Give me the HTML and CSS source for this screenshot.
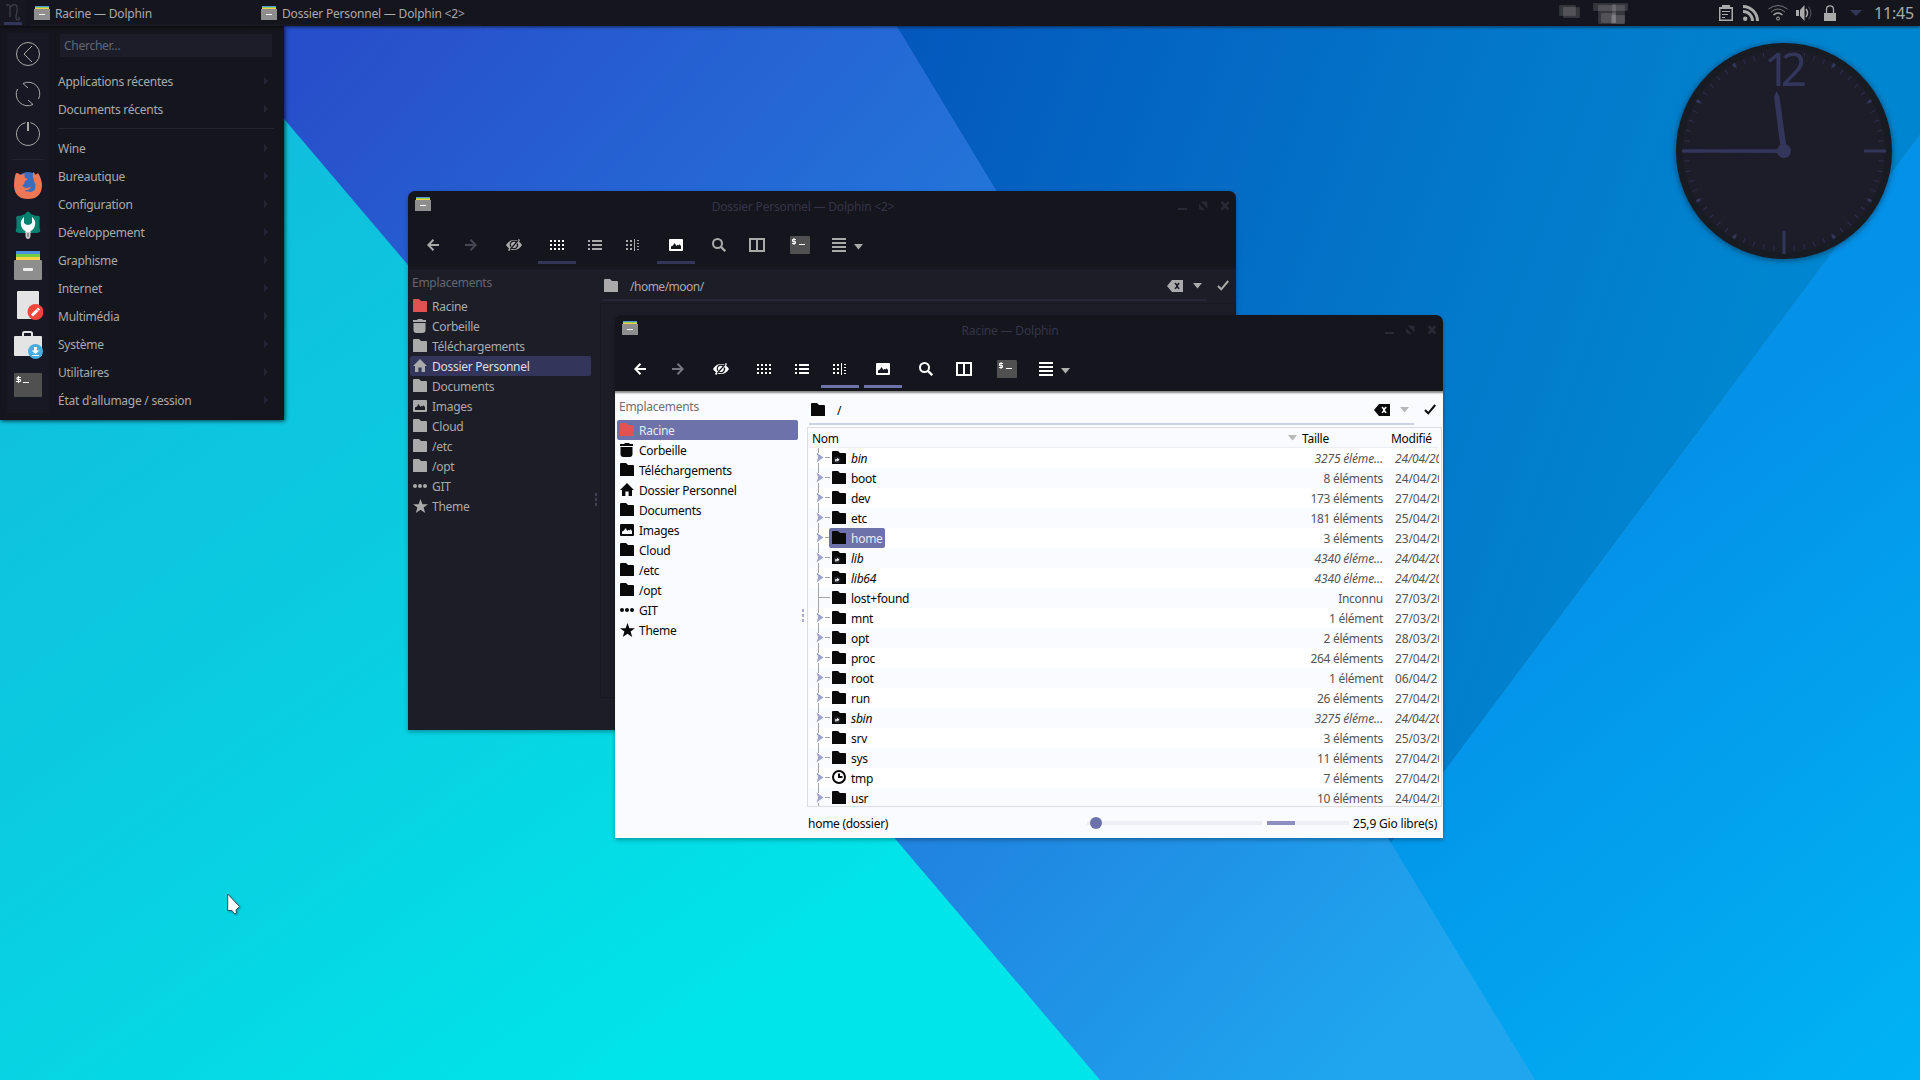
FILE: index.html
```html
<!DOCTYPE html>
<html lang="fr">
<head>
<meta charset="utf-8">
<title>Bureau</title>
<link rel="stylesheet" href="styles.css">
</head>
<body>
<svg class="defs" width="0" height="0" aria-hidden="true">
  <symbol id="folder" viewBox="0 0 14 13"><path d="M0 1.2Q0 0 1 0H6L8 2H13Q14 2 14 3V13H0z"/></symbol>
  <symbol id="folder-link" viewBox="0 0 14 13"><path d="M0 1.2Q0 0 1 0H6L8 2H13Q14 2 14 3V13H0z"/><circle cx="5" cy="8.8" r="3.4" fill="#23232c"/><path d="M3.2 10.4V8.2H5.2V6.8L7.400 8.800L5.200 10.600V9.600H4.400V10.400z" fill="#fff"/></symbol>
  <symbol id="trash" viewBox="0 0 14 14"><path d="M0 1H4L5 0H9L10 1H13V3H0zM.5 4H12.5V11Q12.500 14 9.500 14H3.500Q.5 14 .5 11z"/></symbol>
  <symbol id="home" viewBox="0 0 14 13"><path d="M7 0L14 7H12V13H8.600V8.500H5.400V13H2V7H0z"/></symbol>
  <symbol id="picture" viewBox="0 0 14 12"><path fill-rule="evenodd" d="M1 0H13Q14 0 14 1V11Q14 12 13 12H1Q0 12 0 11V1Q0 0 1 0zM2 10H12V7L10.500 5.200L9.500 6.400L8.500 5.800L7.500 7L5.500 4L4 6.500L2 7.500z"/></symbol>
  <symbol id="dots" viewBox="0 0 14 4"><circle cx="2" cy="2" r="2"/><circle cx="7" cy="2" r="2"/><circle cx="12" cy="2" r="2"/></symbol>
  <symbol id="star" viewBox="0 0 15 14"><path d="M7.500 0L9.400 5.200H15L10.600 8.500L12.200 14L7.500 10.700L2.800 14L4.400 8.500L0 5.200H5.600z"/></symbol>
  <symbol id="recent" viewBox="0 0 14 14"><circle cx="7" cy="7" r="6" fill="none" stroke="currentColor" stroke-width="2"/><path d="M6 3.500H8V6H10.500V8H6z"/></symbol>
  <symbol id="drawer" viewBox="0 0 16 14"><path fill="#5294e2" d="M1 0H15V1H1z"/><path fill="#8bd34f" d="M1 1H15V2H1z"/><path fill="#f9cc45" d="M1 2H15V3H1z"/><path fill="#8e8e8e" d="M0 3H16V14H0z"/><path fill="#fff" d="M5 8H11V9H5z"/></symbol>
  <symbol id="back" viewBox="0 0 12 12"><path fill="none" stroke="currentColor" stroke-width="2" d="M6.500.8L1.300 6L6.500 11.200M1 6H12"/></symbol>
  <symbol id="forward" viewBox="0 0 12 12"><path fill="none" stroke="currentColor" stroke-width="2" d="M5.500.8L10.700 6L5.500 11.200M11 6H0"/></symbol>
  <symbol id="eye" viewBox="0 0 16 12"><path d="M0 6Q3 1 8 1Q10 1 11.400 1.600L12.800 0L14 1L13 2.700Q15 4 16 6Q13 11 8 11Q6 11 4.600 10.400L3.200 12L2 11L3 9.300Q1 8 0 6z"/><path d="M10.700 3.600A3.500 3.500 0 0 0 5 7.700M11.200 4.600A3.500 3.500 0 0 1 5.600 8.600M4.300 10.200L12.200 1.400" fill="none" stroke="#16161f" stroke-width="1.300"/></symbol>
  <symbol id="grid" viewBox="0 0 14 10"><path d="M0 0h2v2h-2zM4 0h2v2h-2zM8 0h2v2h-2zM12 0h2v2h-2zM0 4h2v2h-2zM4 4h2v2h-2zM8 4h2v2h-2zM12 4h2v2h-2zM0 8h2v2h-2zM4 8h2v2h-2zM8 8h2v2h-2zM12 8h2v2h-2z"/></symbol>
  <symbol id="list" viewBox="0 0 14 10"><path d="M0 0h2v2h-2zM0 4h2v2h-2zM0 8h2v2h-2zM4 0h10v2h-10zM4 4h10v2h-10zM4 8h10v2h-10z"/></symbol>
  <symbol id="tree" viewBox="0 0 14 12"><path d="M0 1h2v2h-2zM4 1h2v2h-2zM0 5h2v2h-2zM4 5h2v2h-2zM0 9h2v2h-2zM4 9h2v2h-2zM8 0h1v12h-1zM11 1h2v1h-2zM11 4h2v1h-2zM11 7h2v1h-2zM11 10h2v1h-2z"/></symbol>
  <symbol id="search" viewBox="0 0 14 14"><circle cx="5.500" cy="5.500" r="4.500" fill="none" stroke="currentColor" stroke-width="2"/><path d="M8.800 8.800L13.200 13.200" stroke="currentColor" stroke-width="2.300"/></symbol>
  <symbol id="split" viewBox="0 0 16 14"><path fill-rule="evenodd" d="M0 0H16V14H0zM2 2V12H7V2zM9 2V12H14V2z"/></symbol>
  <symbol id="terminal" viewBox="0 0 20 18"><rect width="20" height="18" rx="1" fill="#505050"/><path d="M6 3.500H2.500V5.500H5.500V7.500H2M4 2V9M9 8.500H15" fill="none" stroke="#fff"/></symbol>
  <symbol id="menu" viewBox="0 0 14 14"><path d="M0 0H14V2H0zM0 4H14V6H0zM0 8H14V10H0zM0 12H14V14H0z"/></symbol>
  <symbol id="caret" viewBox="0 0 9 6"><path d="M0 0H9L4.500 5.500z"/></symbol>
  <symbol id="clear" viewBox="0 0 16 12"><path fill-rule="evenodd" d="M5 0H16V12H5L0 6zM7.400 3.700L9 5.300V6.700L7.400 8.300L8.700 9.300L10 7.700L11.500 9.300L12.800 8.300L11.200 6.700V5.300L12.800 3.700L11.500 2.600L10 4.300L8.700 2.600z"/></symbol>
  <symbol id="check" viewBox="0 0 12 11"><path d="M1 6L4.200 9.300L11.200 1" fill="none" stroke="currentColor" stroke-width="2"/></symbol>
  <symbol id="controls" viewBox="0 0 52 10"><path d="M0 7H9V9H0zM22.500 .5H27.500Q29.500 .5 29.500 2.500V7.500zM21 3L27 9H24Q21 9 21 6z"/><path d="M43.500 1L50.500 8.500M50.500 1L43.500 8.500" stroke="currentColor" stroke-width="2.600"/></symbol>
  <symbol id="expander" viewBox="0 0 14 20"><path d="M2.500 0V5M2.500 15V20M9 9.500H14" stroke="#a2a2a8" fill="none"/><path d="M.5 4.500L7.500 9.500L.5 14.500L2 9.500z" fill="#a2a5cf"/></symbol>
  <symbol id="leaf" viewBox="0 0 14 20"><path d="M2.500 0V20M3 9.500H14" stroke="#a2a2a8" fill="none"/></symbol>
</svg>

<svg class="wallpaper" viewBox="0 0 1920 1080" aria-hidden="true">
  <defs>
    <linearGradient id="ga" gradientUnits="userSpaceOnUse" x1="150" y1="150" x2="750" y2="1000"><stop offset="0" stop-color="#11bcdc"/><stop offset=".5" stop-color="#0acde1"/><stop offset="1" stop-color="#00e5e9"/></linearGradient>
    <linearGradient id="gb" gradientUnits="userSpaceOnUse" x1="290" y1="100" x2="1350" y2="1080"><stop offset="0" stop-color="#284fcb"/><stop offset=".38" stop-color="#2373d9"/><stop offset=".7" stop-color="#2086e1"/><stop offset="1" stop-color="#1fa6ef"/></linearGradient>
    <linearGradient id="gc" gradientUnits="userSpaceOnUse" x1="900" y1="60" x2="1750" y2="360"><stop offset="0" stop-color="#0458bd"/><stop offset=".6" stop-color="#0376c9"/><stop offset="1" stop-color="#0086d0"/></linearGradient>
    <linearGradient id="gd" gradientUnits="userSpaceOnUse" x1="1500" y1="600" x2="1900" y2="1080"><stop offset="0" stop-color="#0491e8"/><stop offset="1" stop-color="#00b3f4"/></linearGradient>
  </defs>
  <path fill="url(#gb)" d="M0 0H1920V1080H0z"/>
  <path fill="url(#ga)" d="M0 0H183L1100 1080H0z"/>
  <path fill="url(#gc)" d="M881 0H1920V135L1391 843z"/>
  <path fill="url(#gd)" d="M1920 135L1391 843L1535 1080H1920z"/>
</svg>

<header class="panel">
  <div class="launcher"><svg width="18" height="20" viewBox="0 0 18 20"><path d="M3 4Q6 1 6 6V15M6 6Q9 1 12 3Q14 5 12.500 12Q11 18 14 18Q17 17 14 15M3 2V4" fill="none" stroke="#3b3b46" stroke-width="1.400"/></svg></div>
  <div class="task"><svg width="16" height="14"><use href="#drawer"/></svg>Racine — Dolphin</div>
  <div class="task"><svg width="16" height="14"><use href="#drawer"/></svg>Dossier Personnel — Dolphin &lt;2&gt;</div>
  <svg class="pager" width="90" height="26" viewBox="0 0 90 26"><g fill="#fff" fill-opacity=".14" stroke="#fff" stroke-opacity=".06"><path d="M10.500 5.500h16v10h-16z"/><path d="M14.500 7.500h16v10h-16z"/><path d="M44.500 3.500h34v7h-34z"/><path d="M49.500 5.500h26v18h-26z"/><path d="M52.500 13.500h14v9h-14z"/><path d="M62.500 15.500h13v8h-13z"/><path d="M63.500 4.500h3v18h-3z"/></g></svg>
  <div class="tray">
    <svg width="14" height="16" viewBox="0 0 14 16"><path fill-rule="evenodd" d="M0 2H3V0H11V2H14V16H0zM1.500 4V14.500H12.500V4zM3 6H11V7H3zM3 9H9V10H3zM3 12H6V13H3z"/></svg>
    <svg width="16" height="16" viewBox="0 0 16 16"><circle cx="2.200" cy="13.800" r="2.200"/><path d="M0 6.500A9.500 9.500 0 0 1 9.500 16M0 1.500A14.500 14.500 0 0 1 14.500 16" fill="none" stroke="currentColor" stroke-width="3"/></svg>
    <svg class="line" width="20" height="16" viewBox="0 0 20 16"><circle cx="10" cy="13.500" r="1.500"/><path d="M5.500 10Q10 6 14.500 10" stroke-width="1.500"/><path d="M3 7Q10 1 17 7M.5 4Q10-3 19.500 4" opacity=".65"/></svg>
    <svg width="16" height="16" viewBox="0 0 16 16"><path d="M0 5H3V11H0zM4 5L8.500 0V16L4 11z"/><path d="M10 4Q13 8 10 12" fill="none" stroke="currentColor" stroke-width="1.500"/><path d="M12.500 1.500Q17.500 8 12.500 14.500" fill="none" stroke="currentColor" opacity=".4"/></svg>
    <svg width="12" height="16" viewBox="0 0 12 16"><path d="M0 8H12V16H0z"/><path d="M2.500 8V4.500Q2.500 .8 6 .8Q9.500 .8 9.500 4.500V8" fill="none" stroke="currentColor" stroke-width="1.300"/></svg>
    <svg class="more" width="12" height="6" viewBox="0 0 12 6"><path d="M0 0H12L6 6z"/></svg>
  </div>
  <time class="time">11:45</time>
</header>

<nav class="appmenu">
  <div class="favorites">
    <svg width="26" height="26" viewBox="0 0 26 26" class="line"><circle cx="13" cy="13" r="11.500"/><path d="M17 5L9 13L17 21"/></svg>
    <svg width="26" height="26" viewBox="0 0 26 26" class="line"><path d="M8 2.500A11.500 11.500 0 0 1 23.500 18M18 23.500A11.500 11.500 0 0 1 2.500 8M8 2.500L13 7M18 23.500L13 19"/></svg>
    <svg width="26" height="26" viewBox="0 0 26 26" class="line"><path d="M10.500 1.700A11.500 11.500 0 1 0 15.500 1.700"/><path d="M13 1V10" stroke-width="2"/></svg>
    <hr>
    <svg width="30" height="30" viewBox="0 0 30 30"><circle cx="15" cy="15" r="13" fill="#3e6cbd"/><path fill="#ee7755" d="M3 3Q6 3 7.500 5Q10 4 12 4Q10.500 6 12 8L15 9L11.500 11.500Q12 14 9.500 15Q10 18 14 18L18 17Q17 20 13.500 20Q17 23.500 21 20.500Q24 17 21 11Q19 6 20 2Q22 3 22.500 5L25 3Q29 9 29 16Q28 29 15 29Q2 29 1 16Q1 8 3 3z"/><path d="M12 20.500Q15 22 18 20" stroke="#3e6cbd" fill="none"/></svg>
    <svg width="28" height="28" viewBox="0 0 28 28"><path fill="#06816f" d="M11 3Q14-2 17 3L22 5Q27 4 25.500 9V17Q28 22 22 22H6Q0 22 2.500 17V9Q1 4 6 5z"/><path fill="#fff" d="M10 6V12Q14 16 18 12V6Q22 9 21 14Q20 19 16.500 20V22H11.500V20Q8 19 7 14Q6 9 10 6z"/><path fill="#ccc" d="M11.500 21H16.500V25Q16 28 14 28Q12 28 11.500 25z"/><path stroke="#555" d="M14 22V26"/></svg>
    <svg width="28" height="29" viewBox="0 0 28 29"><path fill="#4a8fe0" d="M2 0H26V4H2z"/><path fill="#73cf42" d="M2 3H26V7H2z"/><path fill="#ffd24a" d="M2 6H26V10H2z"/><rect y="9" width="28" height="20" rx="1" fill="#8e8e8e"/><rect x="9" y="17" width="10" height="3" rx="1" fill="#eee"/></svg>
    <svg width="30" height="29" viewBox="-1 0 30 29"><rect x="3" width="22" height="28" rx="1" fill="#e4e4e4"/><circle cx="21.500" cy="21" r="8" fill="#f3453b"/><path d="M18 24.500L25 17.500" stroke="#fff" stroke-width="3"/><path d="M22.500 18L24.500 20" stroke="#f3453b" stroke-width=".7"/></svg>
    <svg width="30" height="28" viewBox="0 0 30 28"><path d="M10 5V2.500Q10 1 11.500 1H17.500Q19 1 19 2.500V5" fill="none" stroke="#e4e4e4" stroke-width="2"/><rect y="5" x="1" width="28" height="20" rx="1" fill="#e4e4e4"/><circle cx="22.500" cy="20.500" r="7.500" fill="#45ade2"/><path d="M21 16H24V19.500H26.500L22.500 23L18.500 19.500H21zM19 24H26V25H19z" fill="#fff"/></svg>
    <svg width="28" height="24" viewBox="0 0 28 24"><rect width="28" height="24" rx="1" fill="#505050"/><path d="M7 4.500H3V6.500H6.500V8.500H2M4.500 3V10M9 9.500H15" fill="none" stroke="#fff"/></svg>
  </div>
  <div class="entries">
    <div class="field">Chercher…</div>
    <ul>
      <li>Applications récentes</li>
      <li>Documents récents</li>
    </ul>
    <hr>
    <ul>
      <li>Wine</li>
      <li>Bureautique</li>
      <li>Configuration</li>
      <li>Développement</li>
      <li>Graphisme</li>
      <li>Internet</li>
      <li>Multimédia</li>
      <li>Système</li>
      <li>Utilitaires</li>
      <li>État d'allumage / session</li>
    </ul>
  </div>
</nav>

<svg class="clock" viewBox="-120 -120 240 240" width="240" height="240">
  <circle r="108" fill="#191b23"/>
  <circle r="101.500" fill="#1d1d29"/>
  <g fill="none" stroke="#33365a">
    <circle r="97.500" stroke-width="5" pathLength="360" stroke-dasharray=".6 5.400" stroke-dashoffset=".3" opacity=".75"/>
    <path stroke-width="3" d="M80 0H102M0 80V103M-80 0H-102M84 -48.500L87.500 -50.500M84 48.500L87.500 50.500M-84 48.500L-87.500 50.500M-84 -48.500L-87.500 -50.500M48.500 84L50.500 87.500M-48.500 84L-50.500 87.500M48.500 -84L50.500 -87.500M-48.500 -84L-50.500 -87.500"/>
  </g>
  <path fill="#1d1d29" d="M-20 -101H20V-60H-20z"/>
  <text class="twelve" x="-20" y="-65">12</text>
  <g fill="#33365a"><path d="M-101 -1.500L0 -2V2L-101 1.500zM-3 0L-10 -54L-7.500 -60L-4.500 -54L3 0z"/><circle r="7"/></g>
</svg>

<section class="window dark" id="personnel">
  <div class="titlebar"><svg width="16" height="14"><use href="#drawer"/></svg><h1>Dossier Personnel — Dolphin &lt;2&gt;</h1><svg class="controls" width="52" height="10"><use href="#controls"/></svg></div>
  <div class="toolbar">
    <div class="group"><b><svg width="12" height="12"><use href="#back"/></svg></b><b class="off"><svg width="12" height="12"><use href="#forward"/></svg></b></div>
    <div class="group"><b><svg width="16" height="12"><use href="#eye"/></svg></b></div>
    <div class="group"><b class="on"><svg width="14" height="10"><use href="#grid"/></svg></b><b><svg width="14" height="10"><use href="#list"/></svg></b><b><svg width="14" height="12"><use href="#tree"/></svg></b></div>
    <div class="group"><b class="on"><svg width="14" height="12"><use href="#picture"/></svg></b></div>
    <div class="group"><b><svg width="14" height="14"><use href="#search"/></svg></b><b><svg width="16" height="14"><use href="#split"/></svg></b></div>
    <div class="group"><b><svg width="20" height="18"><use href="#terminal"/></svg></b></div>
    <div class="group menu"><svg width="14" height="14"><use href="#menu"/></svg><svg class="arrow" width="9" height="6"><use href="#caret"/></svg></div>
  </div>
  <div class="body">
    <aside>
      <h2>Emplacements</h2>
      <ul>
        <li><svg class="red" width="14" height="13"><use href="#folder"/></svg>Racine</li>
        <li><svg width="14" height="14"><use href="#trash"/></svg>Corbeille</li>
        <li><svg width="14" height="13"><use href="#folder"/></svg>Téléchargements</li>
        <li class="selected"><svg width="14" height="13"><use href="#home"/></svg>Dossier Personnel</li>
        <li><svg width="14" height="13"><use href="#folder"/></svg>Documents</li>
        <li><svg width="14" height="12"><use href="#picture"/></svg>Images</li>
        <li><svg width="14" height="13"><use href="#folder"/></svg>Cloud</li>
        <li><svg width="14" height="13"><use href="#folder"/></svg>/etc</li>
        <li><svg width="14" height="13"><use href="#folder"/></svg>/opt</li>
        <li><svg width="14" height="4"><use href="#dots"/></svg>GIT</li>
        <li><svg width="15" height="14"><use href="#star"/></svg>Theme</li>
      </ul>
      <i class="handle"></i>
    </aside>
    <main>
      <div class="location"><div class="path"><svg width="14" height="13"><use href="#folder"/></svg><span>/home/moon/</span><svg width="16" height="12"><use href="#clear"/></svg><svg class="arrow" width="9" height="6"><use href="#caret"/></svg></div><svg class="ok" width="12" height="11"><use href="#check"/></svg></div>
      <div class="view"></div>
      <div class="status"></div>
    </main>
  </div>
</section>

<section class="window light" id="racine">
  <div class="titlebar"><svg width="16" height="14"><use href="#drawer"/></svg><h1>Racine — Dolphin</h1><svg class="controls" width="52" height="10"><use href="#controls"/></svg></div>
  <div class="toolbar">
    <div class="group"><b><svg width="12" height="12"><use href="#back"/></svg></b><b class="off"><svg width="12" height="12"><use href="#forward"/></svg></b></div>
    <div class="group"><b><svg width="16" height="12"><use href="#eye"/></svg></b></div>
    <div class="group"><b><svg width="14" height="10"><use href="#grid"/></svg></b><b><svg width="14" height="10"><use href="#list"/></svg></b><b class="on"><svg width="14" height="12"><use href="#tree"/></svg></b></div>
    <div class="group"><b class="on"><svg width="14" height="12"><use href="#picture"/></svg></b></div>
    <div class="group"><b><svg width="14" height="14"><use href="#search"/></svg></b><b><svg width="16" height="14"><use href="#split"/></svg></b></div>
    <div class="group"><b><svg width="20" height="18"><use href="#terminal"/></svg></b></div>
    <div class="group menu"><svg width="14" height="14"><use href="#menu"/></svg><svg class="arrow" width="9" height="6"><use href="#caret"/></svg></div>
  </div>
  <div class="body">
    <aside>
      <h2>Emplacements</h2>
      <ul>
        <li class="selected"><svg class="red" width="14" height="13"><use href="#folder"/></svg>Racine</li>
        <li><svg width="14" height="14"><use href="#trash"/></svg>Corbeille</li>
        <li><svg width="14" height="13"><use href="#folder"/></svg>Téléchargements</li>
        <li><svg width="14" height="13"><use href="#home"/></svg>Dossier Personnel</li>
        <li><svg width="14" height="13"><use href="#folder"/></svg>Documents</li>
        <li><svg width="14" height="12"><use href="#picture"/></svg>Images</li>
        <li><svg width="14" height="13"><use href="#folder"/></svg>Cloud</li>
        <li><svg width="14" height="13"><use href="#folder"/></svg>/etc</li>
        <li><svg width="14" height="13"><use href="#folder"/></svg>/opt</li>
        <li><svg width="14" height="4"><use href="#dots"/></svg>GIT</li>
        <li><svg width="15" height="14"><use href="#star"/></svg>Theme</li>
      </ul>
      <i class="handle"></i>
    </aside>
    <main>
      <div class="location"><div class="path"><svg width="14" height="13"><use href="#folder"/></svg><span>/</span><svg width="16" height="12"><use href="#clear"/></svg><svg class="arrow" width="9" height="6"><use href="#caret"/></svg></div><svg class="ok" width="12" height="11"><use href="#check"/></svg></div>
      <div class="view">
        <div class="columns"><span>Nom</span><svg class="arrow" width="9" height="6"><use href="#caret"/></svg><span>Taille</span><span>Modifié</span></div>
        <div class="files">
          <div class="row link"><svg width="14" height="20"><use href="#expander"/></svg><span class="name"><svg width="14" height="13"><use href="#folder-link"/></svg>bin</span><span class="size">3275 éléme…</span><span class="date">24/04/2018</span></div>
          <div class="row"><svg width="14" height="20"><use href="#expander"/></svg><span class="name"><svg width="14" height="13"><use href="#folder"/></svg>boot</span><span class="size">8 éléments</span><span class="date">24/04/2018</span></div>
          <div class="row"><svg width="14" height="20"><use href="#expander"/></svg><span class="name"><svg width="14" height="13"><use href="#folder"/></svg>dev</span><span class="size">173 éléments</span><span class="date">27/04/2018</span></div>
          <div class="row"><svg width="14" height="20"><use href="#expander"/></svg><span class="name"><svg width="14" height="13"><use href="#folder"/></svg>etc</span><span class="size">181 éléments</span><span class="date">25/04/2018</span></div>
          <div class="row"><svg width="14" height="20"><use href="#expander"/></svg><span class="name current"><svg width="14" height="13"><use href="#folder"/></svg>home</span><span class="size">3 éléments</span><span class="date">23/04/2018</span></div>
          <div class="row link"><svg width="14" height="20"><use href="#expander"/></svg><span class="name"><svg width="14" height="13"><use href="#folder-link"/></svg>lib</span><span class="size">4340 éléme…</span><span class="date">24/04/2018</span></div>
          <div class="row link"><svg width="14" height="20"><use href="#expander"/></svg><span class="name"><svg width="14" height="13"><use href="#folder-link"/></svg>lib64</span><span class="size">4340 éléme…</span><span class="date">24/04/2018</span></div>
          <div class="row"><svg width="14" height="20"><use href="#leaf"/></svg><span class="name"><svg width="14" height="13"><use href="#folder"/></svg>lost+found</span><span class="size">Inconnu</span><span class="date">27/03/2018</span></div>
          <div class="row"><svg width="14" height="20"><use href="#expander"/></svg><span class="name"><svg width="14" height="13"><use href="#folder"/></svg>mnt</span><span class="size">1 élément</span><span class="date">27/03/2018</span></div>
          <div class="row"><svg width="14" height="20"><use href="#expander"/></svg><span class="name"><svg width="14" height="13"><use href="#folder"/></svg>opt</span><span class="size">2 éléments</span><span class="date">28/03/2018</span></div>
          <div class="row"><svg width="14" height="20"><use href="#expander"/></svg><span class="name"><svg width="14" height="13"><use href="#folder"/></svg>proc</span><span class="size">264 éléments</span><span class="date">27/04/2018</span></div>
          <div class="row"><svg width="14" height="20"><use href="#expander"/></svg><span class="name"><svg width="14" height="13"><use href="#folder"/></svg>root</span><span class="size">1 élément</span><span class="date">06/04/2</span></div>
          <div class="row"><svg width="14" height="20"><use href="#expander"/></svg><span class="name"><svg width="14" height="13"><use href="#folder"/></svg>run</span><span class="size">26 éléments</span><span class="date">27/04/2018</span></div>
          <div class="row link"><svg width="14" height="20"><use href="#expander"/></svg><span class="name"><svg width="14" height="13"><use href="#folder-link"/></svg>sbin</span><span class="size">3275 éléme…</span><span class="date">24/04/2018</span></div>
          <div class="row"><svg width="14" height="20"><use href="#expander"/></svg><span class="name"><svg width="14" height="13"><use href="#folder"/></svg>srv</span><span class="size">3 éléments</span><span class="date">25/03/2018</span></div>
          <div class="row"><svg width="14" height="20"><use href="#expander"/></svg><span class="name"><svg width="14" height="13"><use href="#folder"/></svg>sys</span><span class="size">11 éléments</span><span class="date">27/04/2018</span></div>
          <div class="row"><svg width="14" height="20"><use href="#expander"/></svg><span class="name"><svg width="14" height="14"><use href="#recent"/></svg>tmp</span><span class="size">7 éléments</span><span class="date">27/04/2018</span></div>
          <div class="row"><svg width="14" height="20"><use href="#expander"/></svg><span class="name"><svg width="14" height="13"><use href="#folder"/></svg>usr</span><span class="size">10 éléments</span><span class="date">24/04/2018</span></div>
        </div>
      </div>
      <div class="status"><span class="info">home (dossier)</span><div class="slider"><i></i></div><div class="capacity"><i></i></div><span class="free">25,9 Gio libre(s)</span></div>
    </main>
  </div>
</section>

<svg class="pointer" width="14" height="22" viewBox="0 0 14 22"><path d="M.7 1V17.500L5 17.500L7.500 21L9.500 20L9 17L12.500 13.500z" fill="#fff" stroke="#27525c"/></svg>
</body>
</html>
```
FILE: styles.css
```css
* { box-sizing: border-box; }
body {
  margin: 0;
  width: 1920px;
  height: 1080px;
  overflow: hidden;
  position: relative;
  background: #0acde1;
  font: 12px/20px "Noto Sans", sans-serif;
  letter-spacing: -0.27px;
  color: #aaa;
}
svg { display: block; flex: none; fill: currentColor; }
ul { list-style: none; margin: 0; padding: 0; }
h1, h2 { margin: 0; font-size: 12px; font-weight: 400; }
hr { margin: 0; border: 0; height: 1px; background: #24242e; }
.defs, .wallpaper { position: absolute; top: 0; left: 0; }

/* top panel */
.panel {
  position: relative;
  z-index: 2;
  display: flex;
  align-items: center;
  height: 26px;
  background: #15151e;
  box-shadow: 0 1px 3px rgba(0, 0, 0, .6);
}
.launcher { width: 26px; height: 26px; padding: 2px 0 0 4px; background: #171721; }
.launcher::after { content: ""; display: block; width: 18px; height: 3px; background: #33365a; }
.task {
  display: flex;
  align-items: center;
  gap: 5px;
  width: 225px;
  height: 25px;
  margin: 0 -2px 0 4px;
  padding: 3px 0 0 4px;
  border-bottom: 2px solid #181822;
  letter-spacing: -.19px;
}
.task svg { margin-top: -1px; }
.pager { margin-left: auto; margin-right: 80px; }
.tray { display: flex; align-items: center; gap: 10px; width: 142px; }
.tray svg:nth-child(3) { margin-left: -1px; }
.tray svg:nth-child(4) { margin-left: -2px; }
.tray svg:nth-child(5) { margin-left: 2px; }
.tray .more { margin-left: 4px; color: #33365a; }
.time { width: 59px; padding-left: 13px; font-size: 16px; letter-spacing: -.2px; }

/* application menu */
.appmenu {
  position: absolute;
  z-index: 1;
  top: 26px;
  left: 0;
  display: flex;
  gap: 9px;
  width: 284px;
  height: 394px;
  padding: 7px 10px 7px 7px;
  background: #15151e;
  box-shadow: 1px 1px 4px rgba(0, 0, 0, .7);
}
.favorites {
  display: grid;
  grid-template-rows: 40px 40px 40px 11px repeat(6, 40px);
  place-items: center;
  width: 42px;
  height: 380px;
  padding-top: 1px;
  background: #181824;
}
.favorites hr { width: 32px; }
.line { fill: none; stroke: #a9a9a9; }
.entries { flex: 1; }
.field { height: 23px; margin: 1px 2px 11px; padding: 2px 4px; background: #1d1d29; color: #66666d; }
.entries li { display: flex; align-items: center; justify-content: space-between; height: 28px; padding-right: 6px; letter-spacing: -.25px; }
.entries li::after { content: ""; border: 4px solid transparent; border-left-color: #242432; border-right: 0; margin-top: -2px; }
.entries hr { margin: 4px 0 6px; }

.clock { position: absolute; left: 1664px; top: 31px; filter: drop-shadow(0 1px 3px rgba(0, 0, 0, .5)); }
.twelve { font-size: 46px; letter-spacing: -9.5px; fill: #33365a; }

/* file manager windows */
.window {
  position: absolute;
  display: flex;
  flex-direction: column;
  width: 828px;
  background: #15151e;
  border-radius: 7px 7px 0 0;
  box-shadow: 0 2px 4px rgba(0, 0, 0, .3);
}
#personnel { left: 408px; top: 191px; height: 539px; }
#racine { left: 615px; top: 315px; height: 523px; }
.titlebar { display: flex; height: 32px; padding: 6px 6px 6px 7px; }
.titlebar h1 { flex: 1; padding-right: 3px; text-align: center; color: #353447; letter-spacing: -.19px; }
.controls { margin-top: 4px; color: #292935; }
.toolbar { display: flex; gap: 5px; height: 44px; padding: 3px 6px 0; }
.group { display: flex; height: 38px; }
.toolbar b { display: grid; place-items: center; width: 38px; height: 38px; border: solid transparent; border-width: 3px 0; }
.toolbar .menu { align-items: center; gap: 8px; padding-left: 8px; }
.menu .arrow { margin-top: 4px; }
.body { flex: 1; display: flex; min-height: 0; }
aside { position: relative; width: 192px; padding: 6px 9px 0 2px; }
aside h2 { height: 23px; padding-left: 2px; }
aside li { display: flex; align-items: center; gap: 5px; height: 20px; padding: 2px 0 0 3px; border-radius: 2px; }
aside li svg { margin-top: -3px; }
aside li svg[width="15"] { margin-right: -1px; }
.red { color: #e25252; }
.handle { position: absolute; left: 187px; top: 218px; width: 2px; height: 13px; background: repeating-linear-gradient(#a9acd4 0 3px, transparent 3px 5px); }
main { flex: 1; display: flex; flex-direction: column; min-width: 0; }
.location { display: flex; height: 36px; padding: 2px 7px 2px 2px; justify-content: space-between; }
.path { display: flex; align-items: center; width: 605px; border-bottom: 2px solid; padding: 3px 5px 0 2px; }
.path span { flex: 1; padding: 3px 0 0 12px; letter-spacing: -.5px; }
.path .arrow { margin-left: 10px; }
.ok { align-self: center; margin-top: 1px; }
.view { flex: 1; min-height: 0; display: flex; flex-direction: column; border: 1px solid; margin-right: 1px; }
.status { display: flex; align-items: center; height: 31px; }

.dark { color: #aaa; }
.dark .body { background: #1d1d28; box-shadow: inset 0 2px 1px #181822; }
.dark .on { color: #fff; border-bottom-color: #33365a; }
.dark .off { color: #474753; }
.dark h2 { color: #666670; }
.dark .selected { background: #33365a; color: #dcdce4; }
.dark .selected svg { color: #aaa; }
.dark .path { border-color: #262637; }
.dark .view { border-color: #191922; }
.dark .handle { top: 226px; opacity: .25; }
.dark .status { height: 32px; }

.light .toolbar { color: #fff; }
.light .off { color: #77777d; }
.light .on { border-bottom-color: #6e72ab; }
.light .toolbar .arrow { color: #b0b0b0; }
.light .body { background: #fafbfe; color: #090909; box-shadow: inset 0 3px 2px -1px #888; }
.light h2 { color: #707070; }
.light .selected, .current { background: #6e72ab; color: #e9e9f5; }
.light .selected .red { color: #e25252; }
.light .path { border-color: #cdd3e6; }
.light .body .arrow { color: #b8b8b8; }
.light .view { border-color: #dcdee3; padding: 0 2px 0 1px; }
.columns { display: grid; grid-template-columns: 476px 14px 89px 1fr; align-items: center; height: 20px; padding: 1px 0 0 3px; border-bottom: 1px solid #eeeff3; }
.columns .arrow { margin-top: -2px; }
.files { overflow: hidden; flex: 1; }
.row { display: flex; height: 20px; padding-left: 7px; background: #fff; overflow: hidden; }
.row:nth-child(even) { background: #f9fbfe; }
.row > span { padding-top: 1px; }
.row .name { display: flex; align-items: center; gap: 5px; height: 20px; margin-left: -1px; padding: 1px 2px 0 3px; border-radius: 2px; }
.name svg { margin-top: -3px; }
.current svg { color: #090909; }
.size { margin-left: auto; color: #555; }
.date { width: 56px; padding-left: 12px; overflow: hidden; color: #555; letter-spacing: -.15px; }
.link { font-style: italic; }
.link .size { letter-spacing: -.18px; }
.status .info { width: 280px; padding-left: 1px; }
.status span { padding-top: 2px; }
.free { letter-spacing: -.18px; }
.slider { display: flex; align-items: center; width: 175px; height: 4px; margin-right: 5px; background: #eeeff4; }
.slider i { width: 12px; height: 12px; margin-left: 3px; border-radius: 50%; background: #6e72ab; }
.capacity { width: 82px; height: 4px; margin-right: 4px; background: #eeeff4; }
.capacity i { display: block; width: 28px; height: 4px; background: #8b8ebf; }

.pointer { position: absolute; left: 227px; top: 893px; filter: drop-shadow(1px 1px 1px rgba(0, 0, 0, .3)); }
```
